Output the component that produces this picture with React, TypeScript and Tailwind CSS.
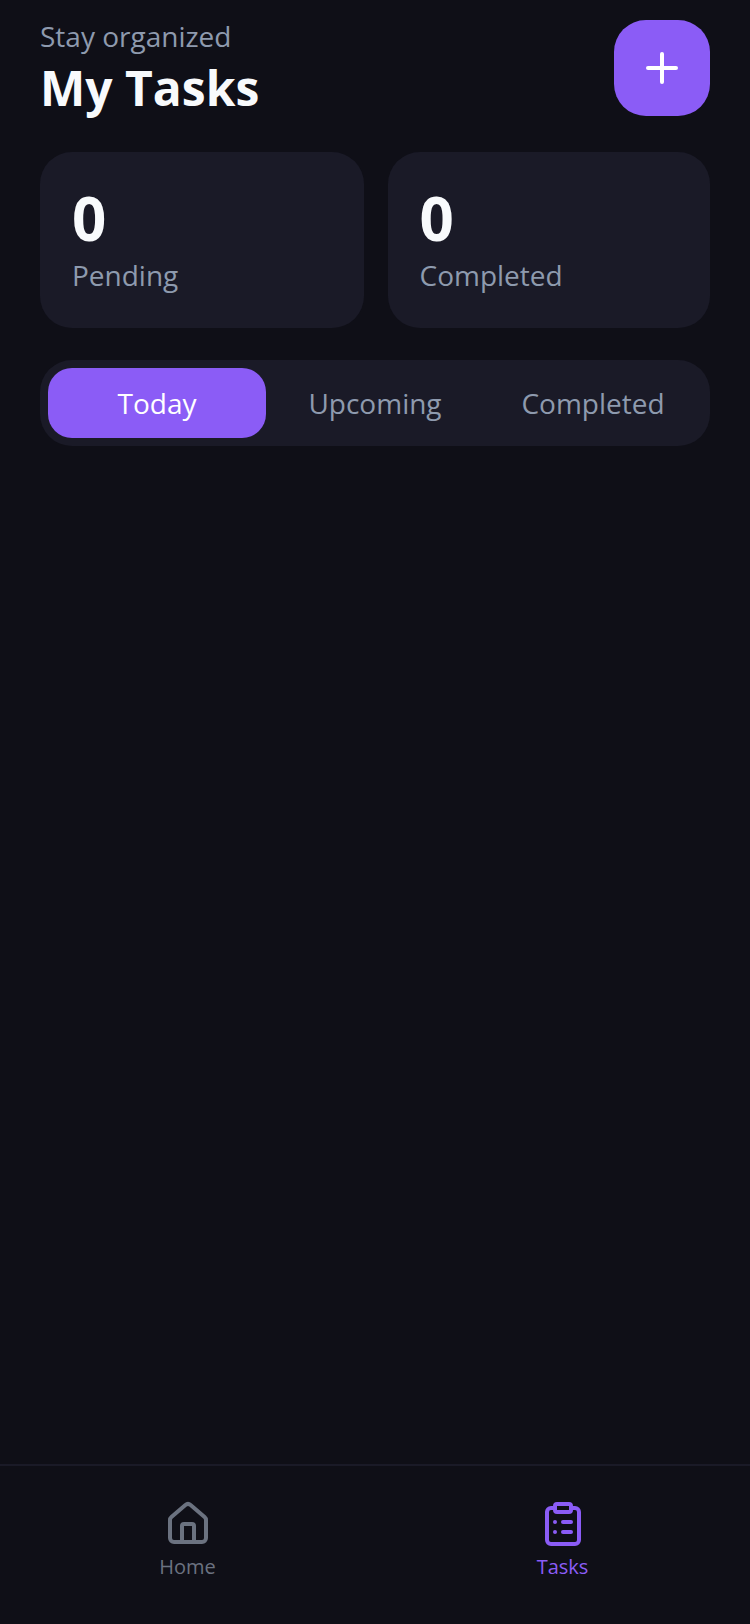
import { Plus, House, ClipboardList } from "lucide-react";

function Stat({ label, size }: { label: string; size: string }) {
  return (
    <div className={`${size} h-[176px] rounded-[32px] bg-[#1a1a27] pl-8 pt-[25px]`}>
      <div className="text-[60px] leading-[82px] font-bold text-[#f8fafc]">0</div>
      <div className="text-[28px] leading-[32px] text-[#8e9aae]">{label}</div>
    </div>
  );
}

export default function App() {
  return (
    <div className="flex h-[1624px] w-[750px] flex-col overflow-hidden bg-[#0f0f17] font-['Open_Sans',sans-serif]">
      <main className="flex-1 px-10">
        <header className="mt-5 flex h-[96px] items-start justify-between">
          <div>
            <p className="text-[28px] leading-[32px] text-[#8e9aae]">Stay organized</p>
            <h1 className="mt-[6px] text-[48px] leading-[60px] font-bold text-[#f8fafc]">My Tasks</h1>
          </div>
          <button className="flex h-24 w-24 items-center justify-center rounded-[32px] bg-[#8b5cf6] text-white">
            <Plus size={48} strokeWidth={2} />
          </button>
        </header>

        <section className="mt-9 flex gap-6">
          <Stat label="Pending" size="w-[323.5px]" />
          <Stat label="Completed" size="flex-1" />
        </section>

        <nav className="mt-8 flex h-[86px] items-center rounded-[32px] bg-[#1a1a27] p-2">
          <div className="flex h-[70px] flex-1 items-center justify-center rounded-[24px] bg-[#8b5cf6] text-[28px] text-white">Today</div>
          <div className="flex h-[70px] flex-1 items-center justify-center text-[28px] text-[#8e9aae]">Upcoming</div>
          <div className="flex h-[70px] flex-1 items-center justify-center text-[28px] text-[#8e9aae]">Completed</div>
        </nav>
      </main>

      <footer className="flex h-[160px] border-t-2 border-[#1a1a27]">
        <div className="flex flex-1 flex-col items-center pt-[34px] text-[#6b7280]">
          <House size={48} strokeWidth={2} />
          <span className="mt-[5px] text-[20px] leading-[28px]">Home</span>
        </div>
        <div className="flex flex-1 flex-col items-center pt-[34px] text-[#8b5cf6]">
          <ClipboardList size={48} strokeWidth={2} />
          <span className="mt-[5px] text-[20px] leading-[28px]">Tasks</span>
        </div>
      </footer>
    </div>
  );
}
